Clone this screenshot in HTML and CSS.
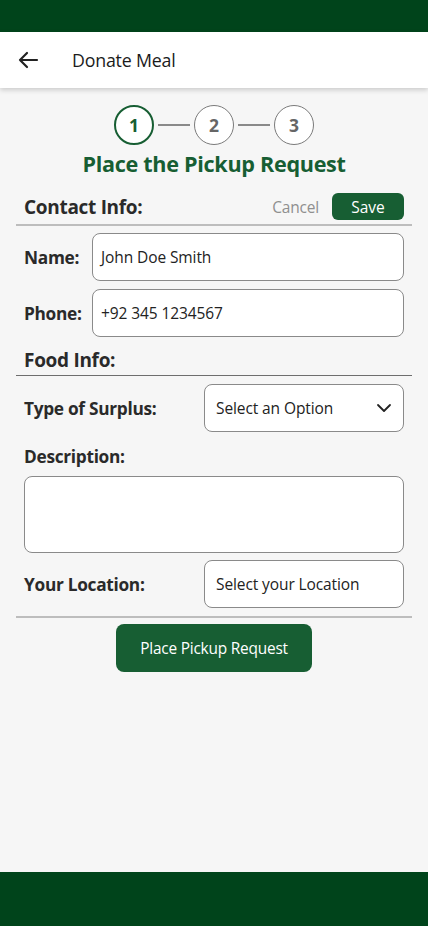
FILE: index.html
```html
<!DOCTYPE html>
<html lang="en">
<head>
<meta charset="utf-8">
<title>Donate Meal</title>
<link rel="stylesheet" href="styles.css">
</head>
<body>
<div class="app">
  <div class="statusbar"></div>
  <header class="appbar">
    <svg class="back" width="24" height="24" viewBox="0 0 24 24"><path d="M21 12H4M11 5l-7 7 7 7" fill="none" stroke="#222" stroke-width="2.2" stroke-linecap="round" stroke-linejoin="round"/></svg>
    <h1 class="appbar-title">Donate Meal</h1>
  </header>
  <main class="content">
    <div class="stepper">
      <div class="step active">1</div>
      <div class="step-line"></div>
      <div class="step">2</div>
      <div class="step-line"></div>
      <div class="step">3</div>
    </div>
    <h2 class="page-title">Place the Pickup Request</h2>

    <div class="section-head contact">
      <span class="section-title">Contact Info:</span>
      <div class="section-actions">
        <span class="cancel">Cancel</span>
        <button class="save">Save</button>
      </div>
    </div>
    <div class="divider light"></div>

    <div class="contact-grid">
      <label class="label">Name:</label>
      <div class="input">John Doe Smith</div>
      <label class="label">Phone:</label>
      <div class="input">+92 345 1234567</div>
    </div>

    <div class="section-head food">
      <span class="section-title">Food Info:</span>
    </div>
    <div class="divider dark"></div>

    <div class="field-row">
      <label class="label">Type of Surplus:</label>
      <div class="input select">
        <span>Select an Option</span>
        <svg width="16" height="16" viewBox="0 0 16 16"><path d="M2 5l6 6 6-6" fill="none" stroke="#222" stroke-width="1.8" stroke-linecap="round" stroke-linejoin="round"/></svg>
      </div>
    </div>
    <label class="label desc-label">Description:</label>
    <div class="textarea"></div>
    <div class="field-row loc">
      <label class="label">Your Location:</label>
      <div class="input select">Select your Location</div>
    </div>
    <div class="divider light bottom"></div>
    <div class="submit-wrap">
      <button class="submit">Place Pickup Request</button>
    </div>
  </main>
  <div class="navbar"></div>
</div>
</body>
</html>
```

FILE: styles.css
```css
* { box-sizing: border-box; }
html, body { margin: 0; padding: 0; }
body {
  font-family: "Open Sans", "Noto Sans", sans-serif;
  background: #f6f6f6;
  color: #222;
}
.app {
  width: 428px;
  height: 926px;
  display: flex;
  flex-direction: column;
}
.statusbar { height: 32px; background: #00441b; flex: none; }
.navbar { height: 54px; background: #00441b; flex: none; }
.appbar {
  height: 56px;
  background: #fff;
  display: flex;
  align-items: center;
  padding-left: 16px;
  box-shadow: 0 2px 5px rgba(0,0,0,0.18);
  flex: none;
  position: relative;
  z-index: 1;
}
.back { flex: none; }
.appbar-title {
  margin: 0 0 0 32px;
  font-size: 17.8px;
  font-weight: 400;
  color: #1b1b1b;
  letter-spacing: -0.2px;
}
.content {
  flex: 1;
  padding: 17px 16px 0;
  display: flex;
  flex-direction: column;
}
.stepper {
  display: flex;
  justify-content: center;
  align-items: center;
  gap: 4px;
  margin-bottom: 5px;
}
.step {
  width: 40px;
  height: 40px;
  border-radius: 50%;
  border: 1px solid #7a7a7a;
  background: #fff;
  display: flex;
  align-items: center;
  justify-content: center;
  font-weight: 700;
  font-size: 17.5px;
  color: #666;
}
.step.active { border: 2px solid #175e33; color: #175e33; }
.step-line { width: 32px; height: 2px; background: #8a8a8a; }
.page-title {
  margin: 0;
  text-align: center;
  font-size: 21.6px;
  font-weight: 700;
  color: #175e33;
  letter-spacing: -0.3px;
  line-height: 28px;
}
.section-head {
  display: flex;
  justify-content: space-between;
  align-items: center;
  padding: 0 8px;
  height: 27px;
}
.section-head.contact { margin-top: 15px; }
.section-head.food { margin-top: 9px; height: 28px; }
.section-title { font-size: 19px; font-weight: 700; color: #2a2a2a; letter-spacing: -0.3px; }
.section-actions { display: flex; align-items: center; gap: 13px; }
.cancel { color: #8f8f8f; font-size: 15.5px; letter-spacing: -0.2px; }
.save {
  background: #175e33;
  color: #fff;
  border: none;
  border-radius: 6px;
  font-family: inherit;
  font-size: 15.5px;
  width: 72px;
  height: 27px;
  padding: 0;
}
.divider.light { height: 2px; background: #bdbdbd; margin-top: 4px; }
.divider.dark { height: 1px; background: #6e6e6e; margin-top: 1px; }
.contact-grid {
  display: grid;
  grid-template-columns: 68px 1fr;
  row-gap: 8px;
  align-items: center;
  padding: 0 8px;
  margin-top: 7px;
}
.field-row {
  display: flex;
  align-items: center;
  justify-content: space-between;
  padding: 0 8px;
  margin-top: 8px;
}
.label {
  font-size: 17.3px;
  font-weight: 700;
  color: #2a2a2a;
  letter-spacing: -0.3px;
  white-space: nowrap;
}
.input {
  height: 48px;
  background: #fff;
  border: 1px solid #8a8a8a;
  border-radius: 8px;
  display: flex;
  align-items: center;
  padding: 0 8px;
  font-size: 15.5px;
  color: #222;
  letter-spacing: -0.1px;
}
.input.select { width: 200px; justify-content: space-between; padding: 0 11px; }
.desc-label { display: block; padding: 0 8px; margin-top: 14px; line-height: 22px; }
.textarea {
  margin: 8px 8px 0;
  height: 77px;
  background: #fff;
  border: 1px solid #8a8a8a;
  border-radius: 8px;
}
.loc { margin-top: 7px; align-items: flex-start; }
.loc .label { margin-top: 13px; }
.divider.bottom { margin-top: 8px; }
.submit-wrap { display: flex; justify-content: center; margin-top: 6px; }
.submit {
  width: 196px;
  height: 48px;
  border: none;
  border-radius: 8px;
  background: #175e33;
  color: #fff;
  font-family: inherit;
  font-size: 15.4px;
  letter-spacing: -0.2px;
}
```
